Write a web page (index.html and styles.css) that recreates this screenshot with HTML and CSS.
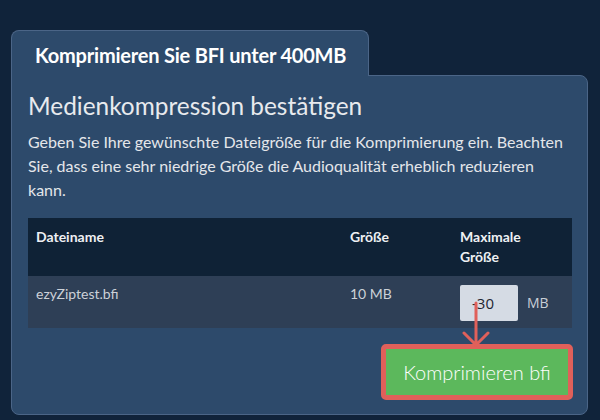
FILE: index.html
```html
<!DOCTYPE html>
<html lang="de">
<head>
<meta charset="utf-8">
<link rel="stylesheet" href="styles.css">
</head>
<body>
<div class="page">
  <div class="tab">Komprimieren Sie BFI unter 400MB</div>
  <div class="panel">
    <h2 class="title">Medienkompression bestätigen</h2>
    <p class="desc">Geben Sie Ihre gewünschte Dateigröße für die Komprimierung ein. Beachten Sie, dass eine sehr niedrige Größe die Audioqualität erheblich reduzieren kann.</p>
    <table class="files">
      <thead>
        <tr>
          <th class="c-name">Dateiname</th>
          <th class="c-size">Größe</th>
          <th class="c-max">Maximale<br>Größe</th>
        </tr>
      </thead>
      <tbody>
        <tr>
          <td>ezyZiptest.bfi</td>
          <td>10 MB</td>
          <td>
            <div class="maxcell">
              <span class="input">-30</span>
              <span class="unit">MB</span>
              <svg class="arrow" width="30" height="46" viewBox="0 0 30 46">
                <path d="M15 2 V44 M3 32 L15 44 L27 32" fill="none" stroke="#e0605a" stroke-width="3" stroke-linecap="round" stroke-linejoin="round"/>
              </svg>
            </div>
          </td>
        </tr>
      </tbody>
    </table>
    <div class="actions">
      <button class="btn">Komprimieren bfi</button>
    </div>
  </div>
</div>
</body>
</html>
```

FILE: styles.css
```css
html, body {
  margin: 0;
  padding: 0;
}
body {
  background: #10233a;
  font-family: Lato, "Noto Sans", sans-serif;
  color: #e6e8ec;
  width: 600px;
  height: 420px;
  overflow: hidden;
}
.page {
  padding: 30px 0 0 11px;
  width: 577px;
}
.tab {
  width: 358px;
  box-sizing: border-box;
  height: 46px;
  background: #2d4a6b;
  border: 1px solid #4b6587;
  border-bottom: none;
  border-radius: 8px 8px 0 0;
  color: #ffffff;
  font-weight: 700;
  font-size: 20px;
  letter-spacing: -0.2px;
  line-height: 24px;
  padding: 12px 0 0 23px;
  position: relative;
  z-index: 1;
  margin-bottom: -1px;
}
.panel {
  background: #2d4a6b;
  border: 1px solid #4b6587;
  border-radius: 0 8px 8px 8px;
  height: 340px;
  box-sizing: border-box;
  padding: 0 14px 0 16px;
}
.title {
  margin: 0;
  padding-top: 15px;
  font-weight: 400;
  font-size: 24.4px;
  line-height: 30px;
  color: #e8eaee;
}
.desc {
  margin: 9px 0 0;
  font-size: 16px;
  line-height: 24px;
  color: #e4e6ea;
}
.files {
  margin-top: 16px;
  width: 544px;
  border-collapse: collapse;
  font-size: 14px;
}
.files th {
  background: #0f2236;
  text-align: left;
  vertical-align: top;
  font-weight: 700;
  line-height: 20px;
  padding: 9px 8px 9px;
  color: #eef0f3;
}
.c-name { width: 298px; }
.c-size { width: 94px; }
.files td {
  background: #2e3f56;
  vertical-align: top;
  padding: 8px 8px 7px;
  line-height: 20px;
  color: #ccd1d8;
  height: 37px;
}
.maxcell {
  display: flex;
  align-items: center;
  gap: 9px;
  position: relative;
}
.input {
  display: block;
  width: 58px;
  height: 36px;
  box-sizing: border-box;
  background: #d5dbe4;
  border-radius: 2px;
  color: #1e2530;
  font-family: "Open Sans", sans-serif;
  font-size: 15px;
  line-height: 36px;
  padding-left: 12px;
  margin-top: 1px;
}
.unit {
  font-family: "Open Sans", sans-serif;
  font-size: 14px;
  color: #c9ced6;
}
.arrow {
  position: absolute;
  left: 1px;
  top: 17px;
}
.actions {
  display: flex;
  justify-content: flex-end;
  width: 545px;
  margin-top: 16px;
}
.btn {
  width: 192px;
  height: 56px;
  box-sizing: border-box;
  background: #5cb85c;
  border: 5px solid #e0605a;
  border-radius: 5px;
  color: #ffffff;
  font-family: Lato, sans-serif;
  font-weight: 300;
  font-size: 20px;
  padding: 0;
}
```
